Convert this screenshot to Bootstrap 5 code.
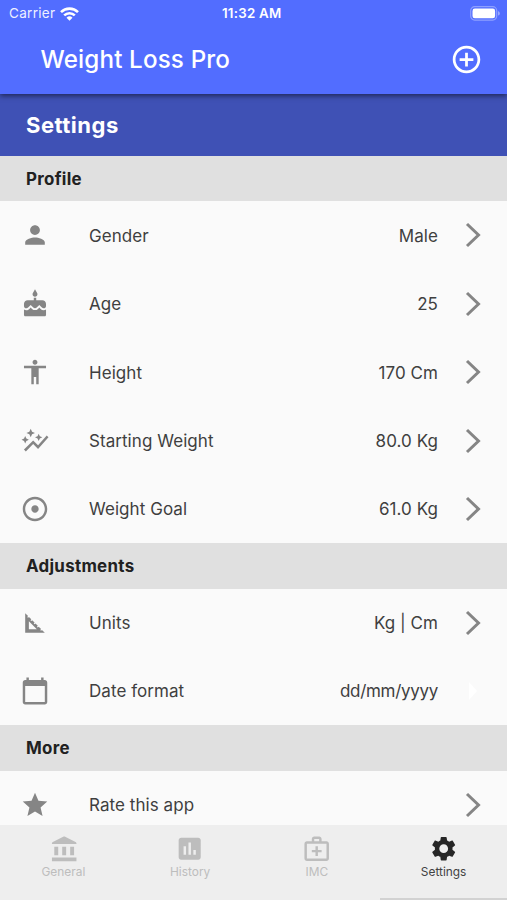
<!DOCTYPE html>
<html lang="en">
<head>
<meta charset="utf-8">
<meta name="viewport" content="width=device-width, initial-scale=1">
<title>Weight Loss Pro</title>
<link href="https://cdn.jsdelivr.net/npm/bootstrap@5.3.0/dist/css/bootstrap.min.css" rel="stylesheet">
<style>
html,body{height:100%;overflow:hidden}
body{font-family:Inter,"Liberation Sans",sans-serif;background:#fafafa;color:#3f3f3f}
.app{height:900px}
.topbar{height:94px;background:#526dff;box-shadow:0 2px 5px rgba(0,0,0,.5);z-index:2}
.status{height:27px;padding:0 6px 0 9px;font-size:13.5px;line-height:27px}
.carrier{letter-spacing:.3px;opacity:.9}
.clock{font-size:13.3px;letter-spacing:.25px;left:222px;white-space:nowrap}
.title-row{height:65px;padding:0 24px 0 40.5px}
.app-title{font-size:24.2px;font-weight:500;letter-spacing:.15px;line-height:1;padding-top:1px}
.page-title{height:62px;background:#3f51b5;padding-left:26px;font-size:22px;letter-spacing:.5px}
.section-head{height:45.3px;background:#e0e0e0;color:#212121;padding:1.6px 0 0 26px;font-size:16.9px;letter-spacing:.3px}
.setting{height:68.4px;padding:0 26px 0 20px;font-size:17px;letter-spacing:.06px}
.setting span{padding-top:2px}
.setting svg{fill:#858585;width:30px;height:30px;padding:.3px}
.setting .txt{margin-left:39px}
.setting .chev{width:16px;height:26px;padding:0;fill:none;stroke:#858585;stroke-width:3;margin-left:27px}
.setting .chev.faint{stroke:none;fill:#fff}
.setting .date-pattern{letter-spacing:-.3px}
.tabs{height:75.5px;background:#eee;color:#bdbdbd;font-size:11.9px;z-index:2}
.tabs .tab{padding-top:9px;line-height:15px}
.tabs svg{width:29.4px;height:29.4px;fill:#bdbdbd;margin-bottom:1px}
.tabs .current{color:#424242}
.tabs .current svg{fill:#262626}
.scroll-hint{right:0;bottom:0;width:127px;height:2px;background:#d2d2d2}
</style>
<script src="https://cdn.jsdelivr.net/npm/bootstrap@5.3.0/dist/js/bootstrap.bundle.min.js"></script>
</head>
<body>
<div class="app d-flex flex-column position-relative overflow-hidden">
<header class="topbar position-relative flex-shrink-0 text-white">
  <div class="status d-flex align-items-center position-relative">
    <span class="carrier">Carrier</span>
    <svg class="ms-1" width="21" height="16" viewBox="0 0 21 16" fill="none" stroke="#fff" stroke-width="2.6"><path d="M2 6.1a12.2 12.2 0 0 1 17 0M5.2 9.4a7.6 7.6 0 0 1 10.6 0"/><path d="M10.5 14.8 7.5 11.8a4.3 4.3 0 0 1 6 0z" fill="#fff" stroke="none"/></svg>
    <span class="clock fw-semibold position-absolute">11:32 AM</span>
    <svg class="ms-auto" width="31" height="15" viewBox="0 0 31 15"><rect x=".7" y=".7" width="26" height="13.4" rx="4" fill="none" stroke="#fff" stroke-opacity=".35" stroke-width="1.2"/><rect x="2.5" y="2.6" width="22.6" height="9.6" rx="2.3" fill="#fff"/><path d="M28.2 5.2c2 .7 2 3.7 0 4.4z" fill="#fff" fill-opacity=".5"/></svg>
  </div>
  <div class="title-row d-flex align-items-center justify-content-between">
    <h1 class="app-title m-0">Weight Loss Pro</h1>
    <svg width="33" height="33" viewBox="0 0 24 24" fill="#fff"><path d="M13 7h-2v4H7v2h4v4h2v-4h4v-2h-4V7zm-1-5C6.48 2 2 6.48 2 12s4.48 10 10 10 10-4.48 10-10S17.52 2 12 2zm0 18c-4.41 0-8-3.59-8-8s3.59-8 8-8 8 3.59 8 8-3.59 8-8 8z"/></svg>
  </div>
</header>
<main class="flex-grow-1 overflow-hidden">
  <div class="page-title d-flex align-items-center text-white fw-bold">Settings</div>
  <div class="section-head d-flex align-items-center fw-bold">Profile</div>
  <div class="setting d-flex align-items-center">
    <svg viewBox="0 0 24 24"><path d="M12 12c2.21 0 4-1.79 4-4s-1.79-4-4-4-4 1.79-4 4 1.79 4 4 4zm0 2c-2.67 0-8 1.34-8 4v2h16v-2c0-2.66-5.33-4-8-4z"/></svg>
    <span class="txt">Gender</span><span class="ms-auto">Male</span><svg class="chev" viewBox="0 0 16 26"><path d="M2 2 13.5 13 2 24"/></svg>
  </div>
  <div class="setting d-flex align-items-center">
    <svg viewBox="0 0 24 24"><path d="M12 6c1.11 0 2-.9 2-2 0-.38-.1-.73-.29-1.03L12 0l-1.71 2.97c-.19.3-.29.65-.29 1.03 0 1.1.9 2 2 2zm4.6 9.99l-1.07-1.07-1.08 1.07c-1.3 1.3-3.58 1.31-4.89 0l-1.07-1.07-1.09 1.07C6.75 16.64 5.88 17 4.96 17c-.73 0-1.4-.23-1.96-.61V21c0 .55.45 1 1 1h16c.55 0 1-.45 1-1v-4.61c-.56.38-1.23.61-1.96.61-.92 0-1.79-.36-2.44-1.01zM18 9h-5V7h-2v2H6c-1.66 0-3 1.34-3 3v1.54c0 1.08.88 1.96 1.96 1.96.52 0 1.02-.2 1.38-.57l2.14-2.13 2.13 2.13c.74.74 2.03.74 2.77 0l2.14-2.13 2.13 2.13c.37.37.86.57 1.38.57 1.08 0 1.96-.88 1.96-1.96V12C21 10.34 19.66 9 18 9z"/></svg>
    <span class="txt">Age</span><span class="ms-auto">25</span><svg class="chev" viewBox="0 0 16 26"><path d="M2 2 13.5 13 2 24"/></svg>
  </div>
  <div class="setting d-flex align-items-center">
    <svg viewBox="0 0 24 24"><path d="M12 2c1.1 0 2 .9 2 2s-.9 2-2 2-2-.9-2-2 .9-2 2-2zm9 7h-6v13h-2v-6h-2v6H9V9H3V7h18v2z"/></svg>
    <span class="txt">Height</span><span class="ms-auto">170 Cm</span><svg class="chev" viewBox="0 0 16 26"><path d="M2 2 13.5 13 2 24"/></svg>
  </div>
  <div class="setting d-flex align-items-center">
    <svg viewBox="0 0 24 24"><path d="M14.06 9.94 12 9l2.06-.94L15 6l.94 2.06L18 9l-2.06.94L15 12zM4 14l.94-2.06L7 11l-2.06-.94L4 8l-.94 2.06L1 11l2.06.94zM8.5 9l1.09-2.41L12 5.5 9.59 4.41 8.5 2 7.41 4.41 5 5.5l2.41 1.09zM4.5 20.5l6-6.01 4 4L23 8.93l-1.41-1.41-7.09 7.97-4-4L3 19z"/></svg>
    <span class="txt">Starting Weight</span><span class="ms-auto">80.0 Kg</span><svg class="chev" viewBox="0 0 16 26"><path d="M2 2 13.5 13 2 24"/></svg>
  </div>
  <div class="setting d-flex align-items-center">
    <svg viewBox="0 0 24 24"><path d="M12 2C6.49 2 2 6.49 2 12s4.49 10 10 10 10-4.49 10-10S17.51 2 12 2zm0 18c-4.41 0-8-3.59-8-8s3.59-8 8-8 8 3.59 8 8-3.59 8-8 8zm3-8c0 1.66-1.34 3-3 3s-3-1.34-3-3 1.34-3 3-3 3 1.34 3 3z"/></svg>
    <span class="txt">Weight Goal</span><span class="ms-auto">61.0 Kg</span><svg class="chev" viewBox="0 0 16 26"><path d="M2 2 13.5 13 2 24"/></svg>
  </div>
  <div class="section-head d-flex align-items-center fw-bold">Adjustments</div>
  <div class="setting d-flex align-items-center">
    <svg viewBox="0 0 24 24"><path d="M17.66 17.66l-.7.7-.71-.71.7-.7-1.94-1.94-.7.7-.71-.71.7-.7-1.94-1.94-.7.7-.71-.71.7-.7L9.7 9.7l-.7.7-.71-.71.7-.7-1.94-1.94-.7.7-.71-.71.7-.7L4 4v16h16l-2.34-2.34zM7 17v-6.5L13.5 17H7z"/></svg>
    <span class="txt">Units</span><span class="ms-auto">Kg | Cm</span><svg class="chev" viewBox="0 0 16 26"><path d="M2 2 13.5 13 2 24"/></svg>
  </div>
  <div class="setting d-flex align-items-center">
    <svg viewBox="0 0 24 24"><path d="M20 3h-1V1h-2v2H7V1H5v2H4c-1.1 0-2 .9-2 2v16c0 1.1.9 2 2 2h16c1.1 0 2-.9 2-2V5c0-1.1-.9-2-2-2zm0 18H4V8h16v13z"/></svg>
    <span class="txt">Date format</span><span class="date-pattern ms-auto">dd/mm/yyyy</span><svg class="chev faint" viewBox="0 0 16 26"><path d="M4 4 12 13 4 22z"/></svg>
  </div>
  <div class="section-head d-flex align-items-center fw-bold">More</div>
  <div class="setting d-flex align-items-center">
    <svg viewBox="0 0 24 24"><path d="M12 17.27L18.18 21l-1.64-7.03L22 9.24l-7.19-.61L12 2 9.19 8.63 2 9.24l5.46 4.73L5.82 21z"/></svg>
    <span class="txt">Rate this app</span><svg class="chev ms-auto" viewBox="0 0 16 26"><path d="M2 2 13.5 13 2 24"/></svg>
  </div>
</main>
<nav class="tabs row g-0 flex-shrink-0 text-center position-relative">
  <div class="tab col-3 d-flex flex-column align-items-center"><svg viewBox="0 0 30 30"><path d="M3 9.8c0-.8.2-1.2.9-1.6L14.5 2.7c.7-.3 1.3-.3 2 0l10.6 5.5c.7.4.9.8.9 1.6v.5H3zM5.4 13h4v8.7h-4zM13.5 13h4v8.7h-4zM21.6 13h4v8.7h-4zM3 24h25v3.8H3z"/></svg>General</div>
  <div class="tab col-3 d-flex flex-column align-items-center"><svg viewBox="0 0 24 24"><path d="M19 3H5c-1.1 0-2 .9-2 2v14c0 1.1.9 2 2 2h14c1.1 0 2-.9 2-2V5c0-1.1-.9-2-2-2zM9 17H7v-7h2v7zm4 0h-2V7h2v10zm4 0h-2v-4h2v4z"/></svg>History</div>
  <div class="tab col-3 d-flex flex-column align-items-center"><svg viewBox="0 0 24 24"><path d="M20 6h-4V4c0-1.1-.9-2-2-2h-4c-1.1 0-2 .9-2 2v2H4c-1.1 0-2 .9-2 2v12c0 1.1.9 2 2 2h16c1.1 0 2-.9 2-2V8c0-1.1-.9-2-2-2zM10 4h4v2h-4V4zm10 16H4V8h16v12z"/><path d="M13 10h-2v3H8v2h3v3h2v-3h3v-2h-3z"/></svg>IMC</div>
  <div class="tab current col-3 d-flex flex-column align-items-center"><svg viewBox="0 0 24 24"><path d="M19.14 12.94c.04-.3.06-.61.06-.94 0-.32-.02-.64-.07-.94l2.03-1.58c.18-.14.23-.41.12-.61l-1.92-3.32c-.12-.22-.37-.29-.59-.22l-2.39.96c-.5-.38-1.03-.7-1.62-.94l-.36-2.54c-.04-.24-.24-.41-.48-.41h-3.84c-.24 0-.43.17-.47.41l-.36 2.54c-.59.24-1.13.57-1.62.94l-2.39-.96c-.22-.08-.47 0-.59.22L2.74 8.87c-.12.21-.08.47.12.61l2.03 1.58c-.05.3-.09.63-.09.94s.02.64.07.94l-2.03 1.58c-.18.14-.23.41-.12.61l1.92 3.32c.12.22.37.29.59.22l2.39-.96c.5.38 1.03.7 1.62.94l.36 2.54c.05.24.24.41.48.41h3.84c.24 0 .44-.17.47-.41l.36-2.54c.59-.24 1.13-.56 1.62-.94l2.39.96c.22.08.47 0 .59-.22l1.92-3.32c.12-.22.07-.47-.12-.61l-2.01-1.58zM12 15.6c-1.98 0-3.6-1.62-3.6-3.6s1.62-3.6 3.6-3.6 3.6 1.62 3.6 3.6-1.62 3.6-3.6 3.6z"/></svg>Settings</div>
  <div class="scroll-hint position-absolute"></div>
</nav>
</div>
</body>
</html>
